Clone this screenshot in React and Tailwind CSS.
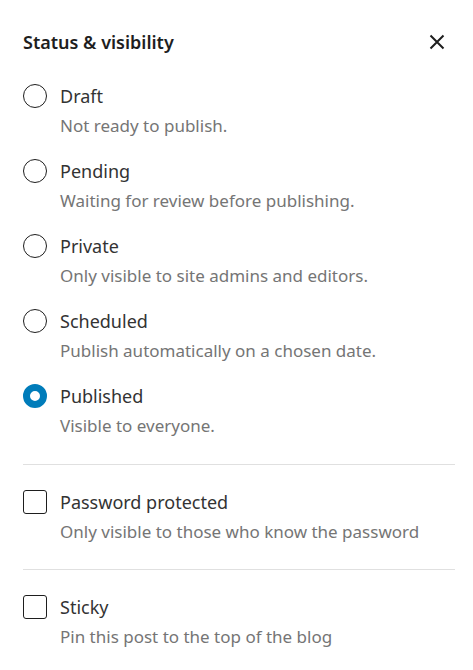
import React from "react";

const radios = [
  { label: "Draft", desc: "Not ready to publish." },
  { label: "Pending", desc: "Waiting for review before publishing." },
  { label: "Private", desc: "Only visible to site admins and editors." },
  { label: "Scheduled", desc: "Publish automatically on a chosen date." },
  { label: "Published", desc: "Visible to everyone.", checked: true },
];

function Radio({ checked }) {
  return checked ? (
    <span className="w-[24px] h-[24px] rounded-full border-[7px] border-[#007cba] bg-white shrink-0 box-border" />
  ) : (
    <span className="w-[24px] h-[24px] rounded-full border-[1.5px] border-[#1e1e1e] bg-white shrink-0 box-border" />
  );
}

function Check() {
  return <span className="w-[24px] h-[24px] rounded-[3px] border-[1.5px] border-[#1e1e1e] bg-white shrink-0 box-border" />;
}

export default function App() {
  return (
    <div
      className="w-[473px] h-[670px] bg-white pl-[23px] pr-[18px] pt-[30px] text-[#1e1e1e]"
      style={{ fontFamily: '"Noto Sans", "Open Sans", sans-serif' }}
    >
      <div className="flex items-center justify-between h-[24px]">
        <h2 className="text-[18px] leading-[24px] font-semibold">Status &amp; visibility</h2>
        <button className="w-[24px] h-[24px] mr-[6px] flex items-center justify-center">
          <svg width="24" height="24" viewBox="0 0 24 24" fill="none" stroke="#1e1e1e" strokeWidth="2">
            <path d="M5.5 5.5l13 13M18.5 5.5l-13 13" />
          </svg>
        </button>
      </div>

      <div className="mt-[30px] flex flex-col gap-[21px]">
        {radios.map((r) => (
          <div key={r.label}>
            <div className="flex items-center gap-[13px] h-[24px]">
              <Radio checked={r.checked} />
              <span className="text-[18px] leading-[24px] text-[#333333]">{r.label}</span>
            </div>
            <div className="pl-[37px] mt-[6px] text-[17px] leading-[24px] text-[#757575]">{r.desc}</div>
          </div>
        ))}
      </div>

      <div className="mt-[26px] border-t border-[#e0e0e0]" />

      <div className="pt-[25px] pb-[25px]">
        <div className="flex items-center gap-[13px] h-[24px]">
          <Check />
          <span className="text-[18px] leading-[24px] text-[#333333]">Password protected</span>
        </div>
        <div className="pl-[37px] mt-[6px] text-[17px] leading-[24px] text-[#757575]">
          Only visible to those who know the password
        </div>
      </div>

      <div className="border-t border-[#e0e0e0]" />

      <div className="pt-[25px]">
        <div className="flex items-center gap-[13px] h-[24px]">
          <Check />
          <span className="text-[18px] leading-[24px] text-[#333333]">Sticky</span>
        </div>
        <div className="pl-[37px] mt-[6px] text-[17px] leading-[24px] text-[#757575]">
          Pin this post to the top of the blog
        </div>
      </div>
    </div>
  );
}
